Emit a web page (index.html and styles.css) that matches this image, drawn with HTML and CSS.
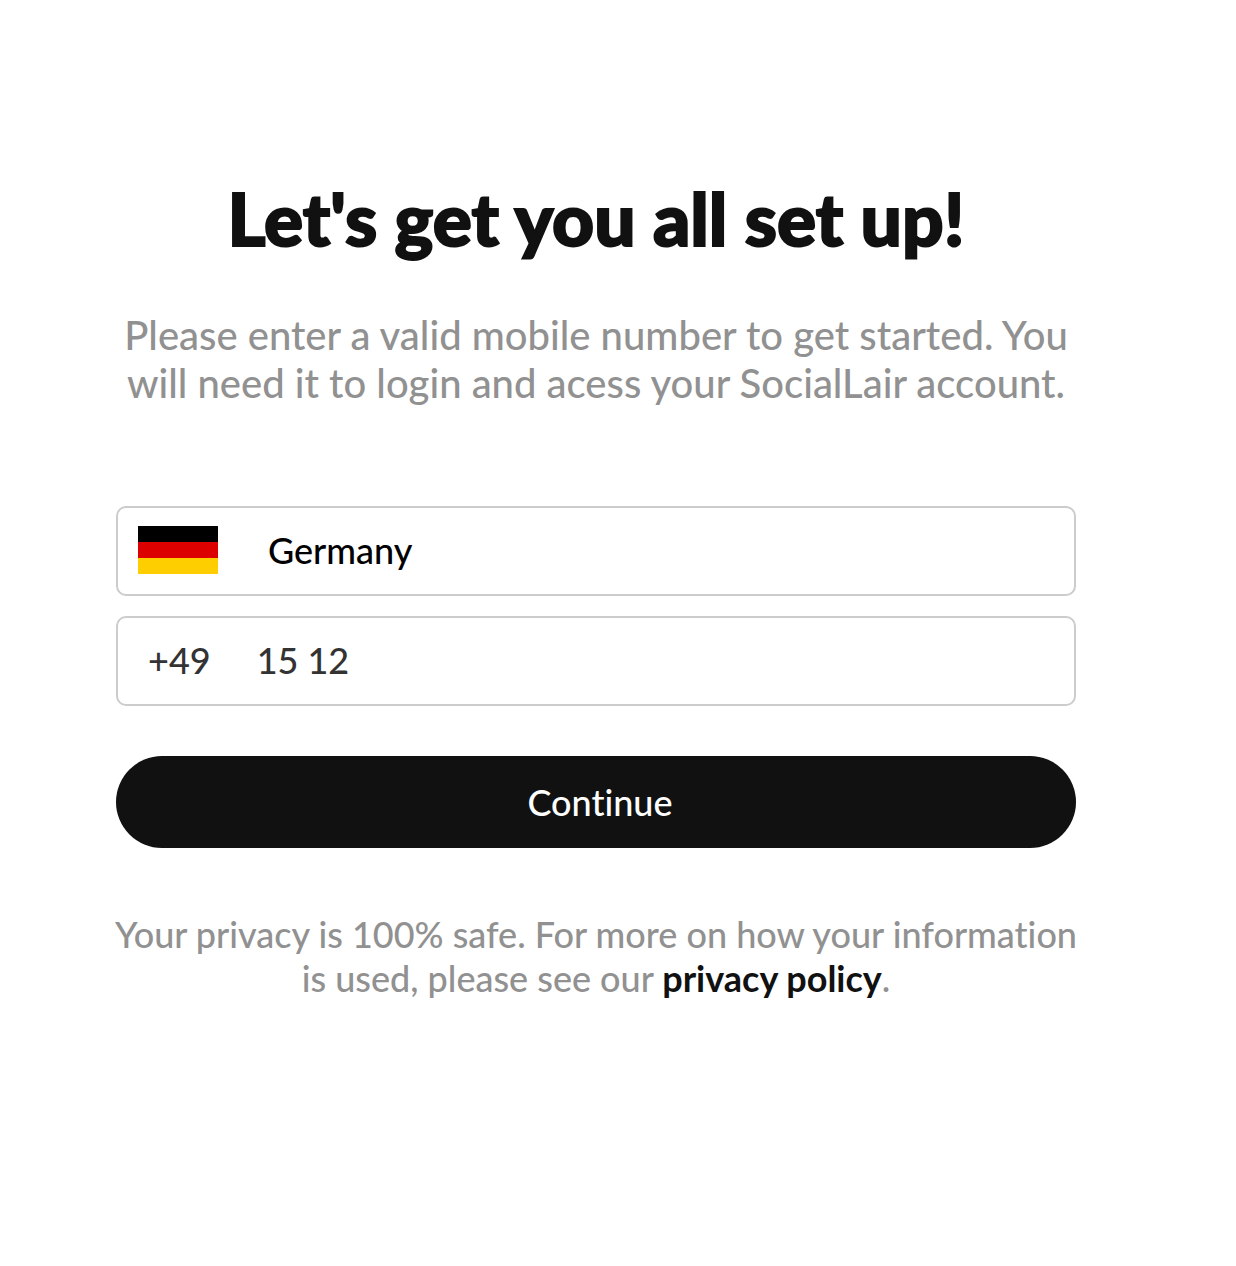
FILE: index.html
```html
<!DOCTYPE html>
<html lang="en">
<head>
<meta charset="utf-8">
<meta name="viewport" content="width=device-width, initial-scale=1">
<title>SocialLair – Get set up</title>
<link rel="stylesheet" href="styles.css">
</head>
<body>
<main class="setup">
  <h1 class="title">Let's get you all set up!</h1>
  <p class="intro">Please enter a valid mobile number to get started. You will need it to login and acess your SocialLair account.</p>
  <form class="form">
    <div class="field field-country">
      <svg class="flag" viewBox="0 0 5 3" aria-hidden="true">
        <rect width="5" height="3" fill="#ffce00"/>
        <rect width="5" height="2" fill="#dd0000"/>
        <rect width="5" height="1" fill="#000"/>
      </svg>
      <select class="country" aria-label="Country">
        <option>Germany</option>
      </select>
    </div>
    <div class="field field-phone">
      <label class="code" for="phone">+49</label>
      <input class="phone" id="phone" type="tel" value="15 12">
    </div>
    <button class="continue" type="button">Continue</button>
  </form>
  <p class="privacy">Your privacy is 100% safe. For more on how your information is used, please see our <a class="policy" href="#">privacy policy</a>.</p>
</main>
</body>
</html>
```
FILE: styles.css
```css
* {
  box-sizing: border-box;
}

body {
  margin: 0;
  background: #fff;
  font-family: Lato, "Liberation Sans", sans-serif;
  font-weight: 500;
  font-variant-ligatures: no-common-ligatures;
}

.setup {
  max-width: 960px;
  margin: 0 160px 0 116px;
  padding: 174px 0 80px;
  text-align: center;
}

.title {
  margin: 0;
  color: #111;
  font-size: 73px;
  line-height: 88px;
  font-weight: 900;
  -webkit-text-stroke: 2px #111;
}

.intro {
  margin: 49px 0 0;
  color: #919191;
  font-size: 40px;
  line-height: 48px;
}

.form {
  display: flex;
  flex-direction: column;
  gap: 20px;
  margin-top: 99px;
}

.field {
  display: flex;
  align-items: center;
  height: 90px;
  border: 2px solid #ccc;
  border-radius: 10px;
  background: #fff;
  font-size: 36px;
}

.field-country {
  gap: 50px;
  padding: 0 20px 2px;
}

.field-phone {
  gap: 46px;
  padding: 0 30px 2px;
  color: #333;
}

.flag {
  flex: none;
  width: 80px;
  height: 48px;
}

.country,
.phone {
  flex: 1;
  min-width: 0;
  height: 60px;
  padding: 0;
  border: 0;
  background: transparent;
  color: inherit;
  font: inherit;
  outline: 0;
  appearance: none;
}

.country {
  color: #000;
}

.continue {
  height: 92px;
  margin-top: 30px;
  padding: 0 0 0 8px;
  border: 0;
  border-radius: 46px;
  background: #111;
  color: #fff;
  font: inherit;
  font-size: 36px;
  font-variant-ligatures: inherit;
}

.privacy {
  margin: 64px -8px 0;
  color: #919191;
  font-size: 36px;
  line-height: 44px;
}

.policy {
  color: #111;
  font-weight: 700;
  text-decoration: none;
}
```
